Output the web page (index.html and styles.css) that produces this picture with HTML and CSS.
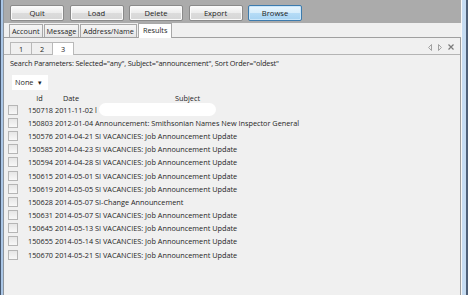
FILE: index.html
```html
<!DOCTYPE html>
<html lang="en">
<head>
    <meta charset="UTF-8">
    <title>Results</title>
    <link rel="stylesheet" href="styles.css">
</head>
<body>
<div class="window">
    <div class="frame frame-l"></div>
    <div class="main">
        <div class="toolbar">
            <button class="btn">Quit</button>
            <button class="btn">Load</button>
            <button class="btn">Delete</button>
            <button class="btn">Export</button>
            <button class="btn btn-active">Browse</button>
        </div>
        <div class="tabs">
            <span class="tab">Account</span>
            <span class="tab">Message</span>
            <span class="tab">Address/Name</span>
            <span class="tab tab-on">Results</span>
        </div>
        <div class="panel">
            <div class="subtabs">
                <span class="subtab">1</span>
                <span class="subtab">2</span>
                <span class="subtab subtab-on">3</span>
                <div class="nav">
                    <svg width="4" height="7" viewBox="0 0 4 7"><path d="M3.5 0.5 L0.6 3.5 L3.5 6.5 Z" fill="none" stroke="#a0a0a0" stroke-width="1"/></svg>
                    <svg width="4" height="7" viewBox="0 0 4 7"><path d="M0.5 0.5 L3.4 3.5 L0.5 6.5 Z" fill="none" stroke="#a0a0a0" stroke-width="1"/></svg>
                    <svg width="6" height="6" viewBox="0 0 6 6"><path d="M0.5 0.5 L5.5 5.5 M5.5 0.5 L0.5 5.5" stroke="#7a7a7a" stroke-width="1.2"/></svg>
                </div>
            </div>
            <div class="params">Search Parameters: Selected="any", Subject="announcement", Sort Order="oldest"</div>
            <div class="filter"><span class="select">None <span class="caret">&#9662;</span></span></div>
            <div class="results">
                <div class="row head"><span></span><span class="c-id">Id</span><span class="c-date">Date</span><span class="c-subj">Subject</span></div>
                <div class="row"><i class="cb"></i><span class="c-id">150718</span><span>2011-11-02</span><span class="subj">l<span class="blot"></span></span></div>
                <div class="row"><i class="cb"></i><span class="c-id">150803</span><span>2012-01-04</span><span class="subj">Announcement: Smithsonian Names New Inspector General</span></div>
                <div class="row"><i class="cb"></i><span class="c-id">150576</span><span>2014-04-21</span><span class="subj">SI VACANCIES: Job Announcement Update</span></div>
                <div class="row"><i class="cb"></i><span class="c-id">150585</span><span>2014-04-23</span><span class="subj">SI VACANCIES: Job Announcement Update</span></div>
                <div class="row"><i class="cb"></i><span class="c-id">150594</span><span>2014-04-28</span><span class="subj">SI VACANCIES: Job Announcement Update</span></div>
                <div class="row"><i class="cb"></i><span class="c-id">150615</span><span>2014-05-01</span><span class="subj">SI VACANCIES: Job Announcement Update</span></div>
                <div class="row"><i class="cb"></i><span class="c-id">150619</span><span>2014-05-05</span><span class="subj">SI VACANCIES: Job Announcement Update</span></div>
                <div class="row"><i class="cb"></i><span class="c-id">150628</span><span>2014-05-07</span><span class="subj">SI-Change Announcement</span></div>
                <div class="row"><i class="cb"></i><span class="c-id">150631</span><span>2014-05-07</span><span class="subj">SI VACANCIES: Job Announcement Update</span></div>
                <div class="row"><i class="cb"></i><span class="c-id">150645</span><span>2014-05-13</span><span class="subj">SI VACANCIES: Job Announcement Update</span></div>
                <div class="row"><i class="cb"></i><span class="c-id">150655</span><span>2014-05-14</span><span class="subj">SI VACANCIES: Job Announcement Update</span></div>
                <div class="row"><i class="cb"></i><span class="c-id">150670</span><span>2014-05-21</span><span class="subj">SI VACANCIES: Job Announcement Update</span></div>
            </div>
        </div>
    </div>
    <div class="frame frame-r"></div>
</div>
</body>
</html>
```

FILE: styles.css
```css
html, body {
    margin: 0;
    padding: 0;
}

body {
    width: 468px;
    height: 295px;
    overflow: hidden;
    font-family: "Open Sans", "Liberation Sans", sans-serif;
    font-size: 7.3px;
    color: #1e1e1e;
    background: #f0f0f0;
}

.window {
    display: flex;
    height: 295px;
}

.frame-l {
    width: 4px;
    background: linear-gradient(to right, #46576e 0 1px, #aac6e6 1px 3px, #8d949c 3px 4px);
}

.frame-r {
    width: 7px;
    background: linear-gradient(to right, #f7f7f7 0 1px, #c6dcf2 1px 5px, #4e6078 5px 7px);
}

.main {
    flex: 1;
    display: flex;
    flex-direction: column;
    min-width: 0;
}

/* toolbar */
.toolbar {
    height: 23px;
    box-sizing: border-box;
    padding: 5px 0 0 6px;
    background: #ababab;
    display: flex;
    gap: 5.5px;
}

.btn {
    width: 54px;
    height: 16px;
    padding: 0;
    font: inherit;
    font-size: 7.6px;
    color: #1e1e1e;
    border: 1px solid #8a8a8a;
    border-radius: 2px;
    background: linear-gradient(#fbfbfb, #ececec 50%, #dcdcdc 51%, #d6d6d6);
    box-shadow: inset 0 0 0 1px #fafafa;
}

.btn-active {
    border-color: #3d7bad;
    background: linear-gradient(#e8f5fd, #d6edfb 50%, #b6dcf6 51%, #a6d3f2);
    box-shadow: inset 0 0 0 1px #c9e6fa;
}

/* top tabs */
.tabs {
    height: 15px;
    box-sizing: border-box;
    padding-left: 5px;
    display: flex;
    align-items: flex-end;
    border-bottom: 1px solid #a0a0a0;
    background: #f0f0f0;
}

.tab {
    height: 13px;
    box-sizing: border-box;
    padding: 0 2px;
    line-height: 12px;
    border: 1px solid #a8a8a8;
    border-bottom: none;
    margin-right: 1px;
    background: linear-gradient(#f6f6f6, #e6e6e6);
}

.tab-on {
    height: 15px;
    margin-bottom: -1px;
    padding: 0 4px;
    line-height: 12px;
    background: #fff;
    position: relative;
}

/* results panel */
.panel {
    flex: 1;
    border-right: 1px solid #9a9a9a;
    background: #f0f0f0;
}

.subtabs {
    height: 17px;
    box-sizing: border-box;
    padding-left: 6px;
    display: flex;
    align-items: flex-end;
    border-bottom: 1px solid #b4b4b4;
}

.subtab {
    width: 22px;
    height: 12px;
    box-sizing: border-box;
    padding-left: 8px;
    line-height: 12px;
    border: 1px solid #b9b9b9;
    border-bottom: none;
    margin-right: -1px;
}

.subtab-on {
    height: 13px;
    margin-bottom: -1px;
    background: #fff;
    position: relative;
}

.nav {
    margin-left: auto;
    margin-right: 6px;
    align-self: center;
    display: flex;
    align-items: center;
    gap: 6px;
    padding-top: 2px;
}

.nav svg {
    display: block;
}

.params {
    padding: 2px 0 0 6px;
    line-height: 12px;
    letter-spacing: -0.15px;
}

.filter {
    padding: 6px 0 0 8px;
}

.select {
    display: inline-block;
    width: 36px;
    height: 15px;
    box-sizing: border-box;
    padding-left: 3px;
    line-height: 15px;
    background: #fff;
}

.caret {
    font-size: 7px;
    margin-left: 3px;
}

/* result list */
.results {
    margin-top: 2px;
}

.row {
    display: grid;
    grid-template-columns: 20px 31px 40px 1fr;
    align-items: center;
    height: 13.2px;
    white-space: nowrap;
}

.row.head {
    height: 11px;
}

.row .c-id {
    text-align: right;
    padding-right: 2px;
}

.row.head .c-id {
    text-align: center;
    padding-right: 0;
}

.row.head .c-date {
    padding-left: 8px;
}

.row.head .c-subj {
    padding-left: 80px;
}

.subj {
    display: flex;
    align-items: center;
}

.cb {
    width: 8px;
    height: 8px;
    margin-left: 4px;
    border: 1px solid #b5b5b5;
    background: linear-gradient(#e6e6e6, #f8f8f8);
}

.blot {
    width: 117px;
    height: 13px;
    margin-left: 2px;
    border-radius: 7px;
    background: #fff;
}
```
